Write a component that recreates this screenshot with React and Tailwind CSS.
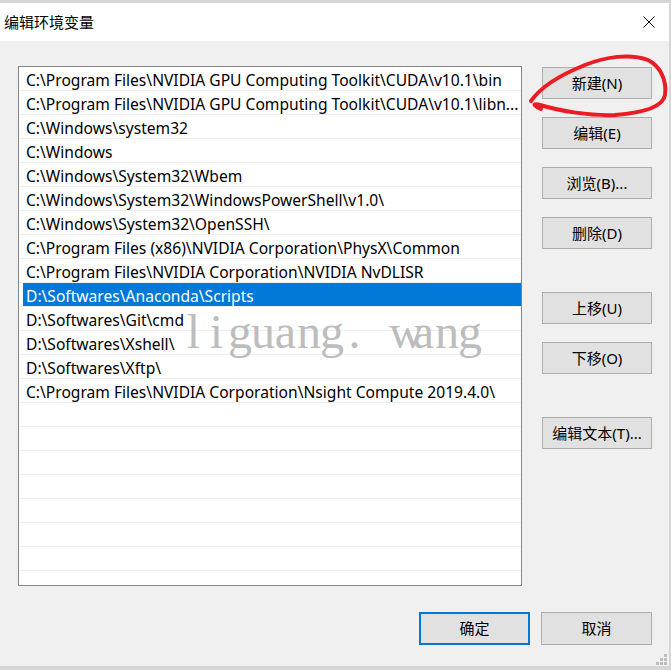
import { useState } from "react";

const paths = [
  "C:\\Program Files\\NVIDIA GPU Computing Toolkit\\CUDA\\v10.1\\bin",
  "C:\\Program Files\\NVIDIA GPU Computing Toolkit\\CUDA\\v10.1\\libn...",
  "C:\\Windows\\system32",
  "C:\\Windows",
  "C:\\Windows\\System32\\Wbem",
  "C:\\Windows\\System32\\WindowsPowerShell\\v1.0\\",
  "C:\\Windows\\System32\\OpenSSH\\",
  "C:\\Program Files (x86)\\NVIDIA Corporation\\PhysX\\Common",
  "C:\\Program Files\\NVIDIA Corporation\\NVIDIA NvDLISR",
  "D:\\Softwares\\Anaconda\\Scripts",
  "D:\\Softwares\\Git\\cmd",
  "D:\\Softwares\\Xshell\\",
  "D:\\Softwares\\Xftp\\",
  "C:\\Program Files\\NVIDIA Corporation\\Nsight Compute 2019.4.0\\",
];

const rows = [...paths, ...Array(8).fill("")];

const sideButtons = [
  { label: "新建(N)", gap: "mt-0" },
  { label: "编辑(E)", gap: "mt-[18px]" },
  { label: "浏览(B)...", gap: "mt-[18px]" },
  { label: "删除(D)", gap: "mt-[18px]" },
  { label: "上移(U)", gap: "mt-[43px]" },
  { label: "下移(O)", gap: "mt-[18px]" },
  { label: "编辑文本(T)...", gap: "mt-[43px]" },
];

const font = "font-['Noto_Sans','Noto_Sans_CJK_SC',sans-serif]";

function Watermark() {
  const chars = "liguang. wang".split("");
  return (
    <div className="pointer-events-none absolute left-[182px] top-[308px] flex font-['Liberation_Serif',serif] text-[48px] leading-[48px] text-[#bdbdbd]">
      {chars.map((c, i) => (
        <span key={i} className="inline-block w-[23px] text-center">
          {c === " " ? "\u00a0" : c}
        </span>
      ))}
    </div>
  );
}

export default function App() {
  const [selected, setSelected] = useState(9);

  return (
    <div className={`relative h-[670px] w-[671px] overflow-hidden bg-[#d6d6d6] ${font}`}>
      <div className="mt-[3px] flex h-[663px] w-[669px] flex-col bg-[#f0f0f0]">
        <div className="flex h-[38px] items-center justify-between bg-white pl-[4px] pr-[14px]">
          <span className="text-[15px] text-black">编辑环境变量</span>
          <svg width="12" height="12" viewBox="0 0 12 12">
            <path d="M0.5 0.5L11.5 11.5M11.5 0.5L0.5 11.5" stroke="#000" strokeWidth="1" />
          </svg>
        </div>

        <div className="flex pl-[18px] pt-[25px]">
          <div className="h-[520px] w-[504px] overflow-hidden border border-[#858585] bg-white">
            {rows.map((p, i) => (
              <div
                key={i}
                onClick={() => p && setSelected(i)}
                className="flex h-[24px] border-b border-[#eeeeee]"
              >
                <div
                  className={`ml-[4px] flex flex-1 items-center overflow-hidden whitespace-nowrap pl-[3px] pt-[4px] text-[15.6px] ${
                    selected === i ? "bg-[#0078d7] text-white" : "text-black"
                  }`}
                >
                  {p}
                </div>
              </div>
            ))}
          </div>

          <div className="ml-[20px] mt-[1px] flex flex-col">
            {sideButtons.map((b) => (
              <button
                key={b.label}
                className={`${b.gap} h-[32px] w-[110px] border border-[#adadad] bg-[#e1e1e1] text-[15px] text-black`}
              >
                {b.label}
              </button>
            ))}
          </div>
        </div>

        <div className="mt-[26px] flex justify-end gap-[11px] pr-[17px]">
          <button className="h-[33px] w-[111px] border-2 border-[#0078d7] bg-[#e1e1e1] text-[15px] text-black">
            确定
          </button>
          <button className="h-[33px] w-[111px] border border-[#adadad] bg-[#e1e1e1] text-[15px] text-black">
            取消
          </button>
        </div>
      </div>

      <Watermark />

      <svg className="pointer-events-none absolute left-0 top-0" width="671" height="670">
        <path
          d="M531 101 C540 88 560 75 585 65 C605 57 630 53 648 60 C660 66 667 80 665 95 C663 108 640 113 615 115 C590 116 560 111 540 105 C533 103 532 105 541 109"
          fill="none"
          stroke="#ec1c24"
          strokeWidth="4"
          strokeLinecap="round"
          strokeLinejoin="round"
        />
        <rect x="664" y="654" width="3" height="3" fill="#bcbcbc" />
        <rect x="660" y="658" width="3" height="3" fill="#bcbcbc" />
        <rect x="664" y="658" width="3" height="3" fill="#bcbcbc" />
        <rect x="656" y="662" width="3" height="3" fill="#bcbcbc" />
        <rect x="660" y="662" width="3" height="3" fill="#bcbcbc" />
        <rect x="664" y="662" width="3" height="3" fill="#bcbcbc" />
      </svg>
    </div>
  );
}
